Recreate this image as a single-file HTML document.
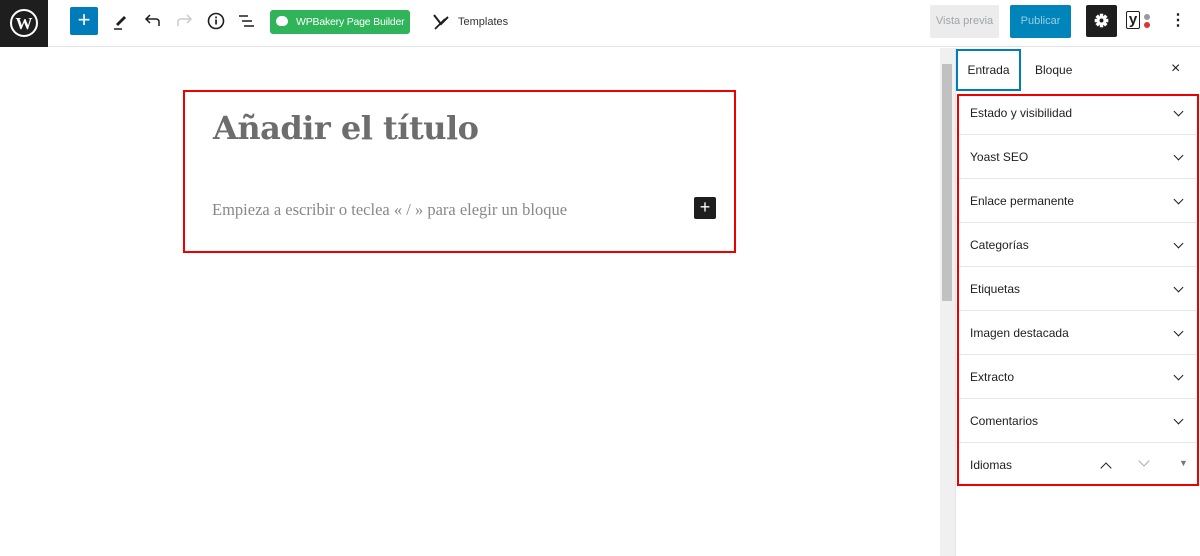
<!DOCTYPE html>
<html><head><meta charset="utf-8"><style>
*{box-sizing:border-box;margin:0;padding:0}
body{width:1200px;height:556px;overflow:hidden;background:#fff;font-family:"Liberation Sans",sans-serif;position:relative;color:#1e1e1e}
.a{position:absolute}
.row{position:absolute;left:959px;width:237px;height:44px;border-bottom:1px solid #e6e6e6;font-size:12px;display:flex;align-items:center;padding-left:11px}
.chev{position:absolute;right:14px;top:17px;width:7px;height:7px;border-right:1.6px solid #1e1e1e;border-bottom:1.6px solid #1e1e1e;transform:rotate(45deg)}
</style></head><body>
<div class="a" style="left:0;top:0;width:1200px;height:47px;border-bottom:1px solid #e2e4e7"></div>
<div class="a" style="left:0;top:0;width:48px;height:47px;background:#1e1e1e"></div>
<svg class="a" style="left:9px;top:8px" width="30" height="30" viewBox="0 0 30 30"><circle cx="15" cy="15" r="13" fill="none" stroke="#fff" stroke-width="2"/><text x="15" y="21" font-family="Liberation Serif" font-weight="bold" font-size="17" fill="#fff" text-anchor="middle">W</text></svg>
<div class="a" style="left:70px;top:7px;width:28px;height:28px;background:#007cba;border-radius:2px;color:#fff;font-size:22px;line-height:26px;text-align:center">+</div>
<svg class="a" style="left:111px;top:11px" width="20" height="20"><path d="M5 13 L13 5 L15 7 L7 15 Z" fill="#1e1e1e"/><line x1="3" y1="18" x2="11" y2="18" stroke="#1e1e1e" stroke-width="1.5"/></svg>
<svg class="a" style="left:143px;top:11px" width="20" height="20"><path d="M16 15 V11 Q16 8 13 8 H4 M7 4 L3 8 L7 12" fill="none" stroke="#1e1e1e" stroke-width="1.5"/></svg>
<svg class="a" style="left:174px;top:11px" width="20" height="20"><path d="M4 15 V11 Q4 8 7 8 H16 M13 4 L17 8 L13 12" fill="none" stroke="#ccc" stroke-width="1.5"/></svg>
<svg class="a" style="left:206px;top:11px" width="20" height="20"><circle cx="10" cy="10" r="7.5" fill="none" stroke="#1e1e1e" stroke-width="1.6"/><rect x="9.2" y="8.5" width="1.7" height="5" fill="#1e1e1e"/><rect x="9.2" y="5.5" width="1.7" height="1.8" fill="#1e1e1e"/></svg>
<svg class="a" style="left:237px;top:11px" width="20" height="20"><path d="M2 5h9M5 10h10M7 15h10" stroke="#1e1e1e" stroke-width="1.6"/></svg>
<div class="a" style="left:270px;top:10px;width:140px;height:24px;background:#2fb45a;border-radius:3px;color:#fff;font-size:10.5px;line-height:24px;padding-left:26px;white-space:nowrap;letter-spacing:-0.2px">WPBakery Page Builder</div>
<div class="a" style="left:276px;top:16px;width:12px;height:10px;background:#fff;border-radius:6px 6px 5px 5px"></div>
<svg class="a" style="left:432px;top:12px" width="18" height="20"><path d="M2 3 L9 12 L16 5" fill="none" stroke="#1e1e1e" stroke-width="2"/><path d="M3 17 L13 7" stroke="#1e1e1e" stroke-width="1.8"/></svg>
<div class="a" style="left:458px;top:16px;font-size:11px;color:#333">Templates</div>
<div class="a" style="left:930px;top:5px;width:69px;height:33px;background:#ececec;border-radius:2px;color:#a0a5aa;font-size:11px;line-height:33px;text-align:center">Vista previa</div>
<div class="a" style="left:1010px;top:5px;width:61px;height:33px;background:#0085ba;border-radius:2px;color:#9ccbe4;font-size:11px;line-height:33px;text-align:center">Publicar</div>
<div class="a" style="left:1086px;top:5px;width:31px;height:32px;background:#1e1e1e;border-radius:2px"></div>
<svg class="a" style="left:1093px;top:12px" width="17" height="17" viewBox="0 0 20 20"><g fill="#fff"><circle cx="10" cy="10" r="5.5"/><rect x="8" y="2" width="4" height="16"/><rect x="2" y="8" width="16" height="4"/><rect x="8" y="2" width="4" height="16" transform="rotate(45 10 10)"/><rect x="8" y="2" width="4" height="16" transform="rotate(-45 10 10)"/></g><circle cx="10" cy="10" r="2.3" fill="#1e1e1e"/></svg>
<div class="a" style="left:1126px;top:11px;font-size:15px;font-weight:bold;border:1px solid #1e1e1e;width:14px;height:18px;line-height:16px;text-align:center;border-radius:2px">y</div>
<div class="a" style="left:1144px;top:14px;width:6px;height:6px;border-radius:3px;background:#999"></div>
<div class="a" style="left:1144px;top:22px;width:6px;height:6px;border-radius:3px;background:#dc3232"></div>
<div class="a" style="left:1170px;top:10px;font-size:16px;font-weight:bold">⋮</div>
<!-- editor -->
<div class="a" style="left:183px;top:90px;width:553px;height:163px;border:2px solid #e00"></div>
<div class="a" style="left:213px;top:109px;font-family:'DejaVu Serif','Liberation Serif',serif;font-weight:bold;font-size:32px;color:#6d6d6d;letter-spacing:-0.5px">Añadir el título</div>
<div class="a" style="left:212px;top:200px;font-family:'Liberation Serif',serif;font-size:16.5px;color:#888">Empieza a escribir o teclea « / » para elegir un bloque</div>
<div class="a" style="left:694px;top:197px;width:22px;height:22px;background:#1e1e1e;border-radius:2px;color:#fff;font-size:18px;line-height:21px;text-align:center">+</div>
<!-- scrollbar -->
<div class="a" style="left:940px;top:48px;width:15px;height:508px;background:#f0f0f0"></div>
<div class="a" style="left:942px;top:64px;width:10px;height:237px;background:#c1c1c1"></div>
<div class="a" style="left:955px;top:48px;width:1px;height:508px;background:#e2e4e7"></div>
<!-- sidebar -->
<div class="a" style="left:956px;top:49px;width:65px;height:42px;border:2px solid #007cba;font-size:12px;line-height:38px;text-align:center">Entrada</div>
<div class="a" style="left:1035px;top:63px;font-size:12px">Bloque</div>
<div class="a" style="left:1171px;top:60px;font-size:16px">×</div>
<div class="row" style="top:91px">Estado y visibilidad<div class="chev"></div></div>
<div class="row" style="top:135px">Yoast SEO<div class="chev"></div></div>
<div class="row" style="top:179px">Enlace permanente<div class="chev"></div></div>
<div class="row" style="top:223px">Categorías<div class="chev"></div></div>
<div class="row" style="top:267px">Etiquetas<div class="chev"></div></div>
<div class="row" style="top:311px">Imagen destacada<div class="chev"></div></div>
<div class="row" style="top:355px">Extracto<div class="chev"></div></div>
<div class="row" style="top:399px">Comentarios<div class="chev"></div></div>
<div class="row" style="top:443px;border-bottom:none">Idiomas
<div class="a" style="left:143px;top:21px;width:8px;height:8px;border-left:1.8px solid #1e1e1e;border-top:1.8px solid #1e1e1e;transform:rotate(45deg)"></div>
<div class="a" style="left:181px;top:14px;width:8px;height:8px;border-right:1.5px solid #aaa;border-bottom:1.5px solid #aaa;transform:rotate(45deg)"></div>
<div class="a" style="left:220px;top:15px;font-size:9px;color:#777">▼</div></div>
<div class="a" style="left:957px;top:94px;width:242px;height:392px;border:2px solid #e00"></div>
</body></html>
